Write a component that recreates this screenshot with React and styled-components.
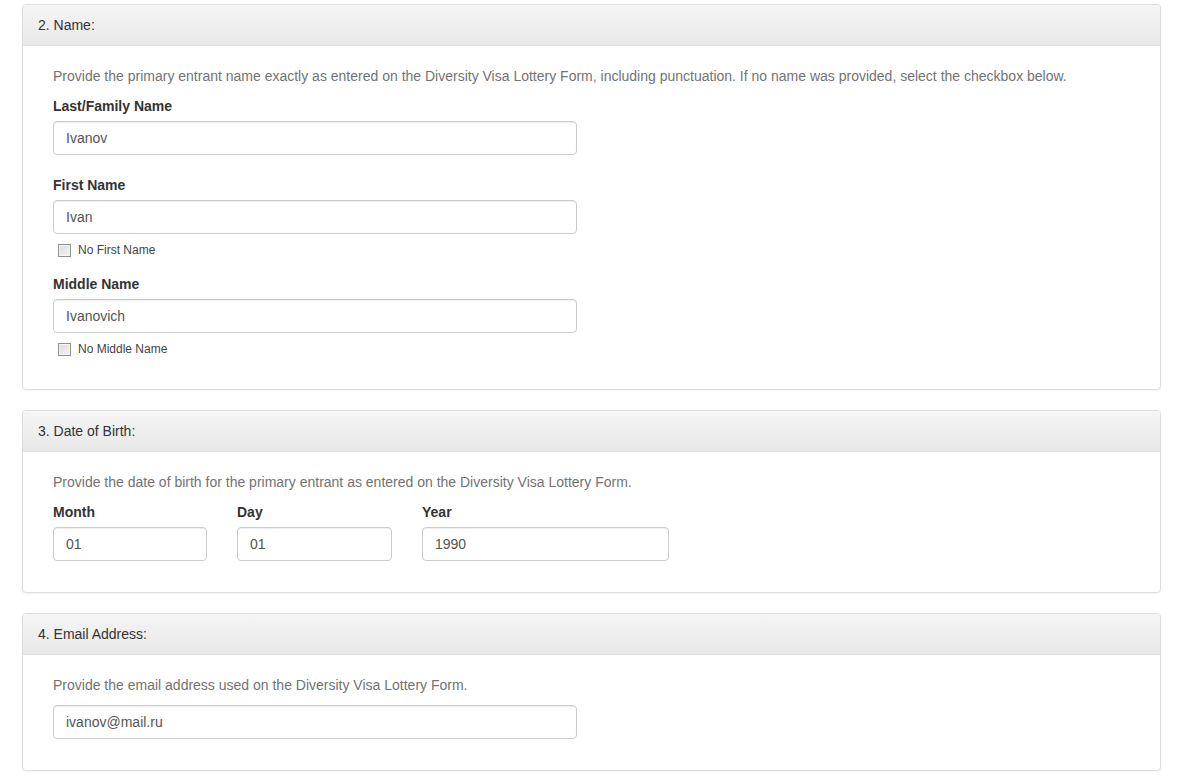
import React from 'react'
import styled, { createGlobalStyle } from 'styled-components'

const GlobalStyle = createGlobalStyle`
    body {
        margin: 0;
        background: #fff;
        font-family: "Liberation Sans", Arial, sans-serif;
        font-size: 14px;
        line-height: 20px;
        color: #333;
    }
`

const sections = [
    {
        title: '2. Name:',
        help: 'Provide the primary entrant name exactly as entered on the Diversity Visa Lottery Form, including punctuation. If no name was provided, select the checkbox below.',
        fields: [
            { label: 'Last/Family Name', value: 'Ivanov' },
            { label: 'First Name', value: 'Ivan', check: 'No First Name' },
            { label: 'Middle Name', value: 'Ivanovich', check: 'No Middle Name' },
        ],
    },
]

function Field({ label, value, check }) {
    return (
        <FieldGroup $check={!!check}>
            <Label>{label}</Label>
            <Input type="text" defaultValue={value} />
            {check && (
                <CheckRow>
                    <CheckBox type="checkbox" />
                    {check}
                </CheckRow>
            )}
        </FieldGroup>
    )
}

function App() {
    return (
        <Page>
            <GlobalStyle />
            {sections.map((s) => (
                <Panel key={s.title}>
                    <Heading>{s.title}</Heading>
                    <Body>
                        <Help>{s.help}</Help>
                        {s.fields.map((f) => (
                            <Field key={f.label} {...f} />
                        ))}
                    </Body>
                </Panel>
            ))}

            <Panel>
                <Heading>3. Date of Birth:</Heading>
                <Body>
                    <Help>Provide the date of birth for the primary entrant as entered on the Diversity Visa Lottery Form.</Help>
                    <DateRow>
                        <DateCol $width={154}>
                            <Label>Month</Label>
                            <Input type="text" defaultValue="01" />
                        </DateCol>
                        <DateCol $width={155}>
                            <Label>Day</Label>
                            <Input type="text" defaultValue="01" />
                        </DateCol>
                        <DateCol $width={247}>
                            <Label>Year</Label>
                            <Input type="text" defaultValue="1990" />
                        </DateCol>
                    </DateRow>
                </Body>
            </Panel>

            <Panel>
                <Heading>4. Email Address:</Heading>
                <Body>
                    <Help>Provide the email address used on the Diversity Visa Lottery Form.</Help>
                    <FieldGroup>
                        <Input type="text" defaultValue="ivanov@mail.ru" />
                    </FieldGroup>
                </Body>
            </Panel>
        </Page>
    )
}
export default App

const Page = styled.div`
    padding: 4px 29px 0 22px;
`
const Panel = styled.div`
    border: 1px solid #ddd;
    border-radius: 4px;
    background: #fff;
    box-shadow: 0 1px 2px rgba(0, 0, 0, .05);
    margin-bottom: 20px;
    overflow: hidden;
`
const Heading = styled.div`
    padding: 10px 15px;
    border-bottom: 1px solid #ddd;
    background: linear-gradient(to bottom, #f5f5f5 0%, #e8e8e8 100%);
    color: #333;
`
const Body = styled.div`
    padding: 20px 30px 31px;
`
const Help = styled.p`
    margin: 0 0 10px;
    color: #737373;
`
const FieldGroup = styled.div`
    display: flex;
    flex-direction: column;
    width: 524px;
    margin-bottom: ${(p) => (p.$check ? '15px' : '20px')};

    &:last-child {
        margin-bottom: 0;
    }
`
const Label = styled.label`
    font-weight: 700;
    color: #333;
    margin-bottom: 5px;
`
const Input = styled.input`
    box-sizing: border-box;
    width: 100%;
    height: 34px;
    padding: 6px 12px;
    font-family: inherit;
    font-size: 14px;
    color: #555;
    background: #fff;
    border: 1px solid #ccc;
    border-radius: 4px;
    box-shadow: inset 0 1px 1px rgba(0, 0, 0, .075);
    outline: none;
`
const CheckRow = styled.label`
    display: flex;
    align-items: center;
    height: 18px;
    margin-top: 7px;
    padding-left: 5px;
    font-size: 12px;
    color: #444;
`
const CheckBox = styled.input`
    appearance: none;
    box-sizing: border-box;
    width: 13px;
    height: 13px;
    margin: 0 7px 0 0;
    border: 1px solid #8e8f8f;
    background: linear-gradient(135deg, #dcdcdc 0%, #f4f4f4 100%);
    box-shadow: inset 0 0 0 1px #f4f4f4;
`
const DateRow = styled.div`
    display: flex;
    gap: 30px;
`
const DateCol = styled.div`
    display: flex;
    flex-direction: column;
    width: ${(p) => p.$width}px;
`
